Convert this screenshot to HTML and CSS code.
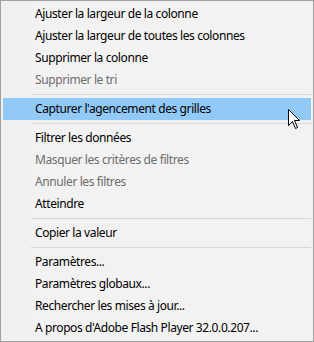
FILE: index.html
```html
<!DOCTYPE html>
<html lang="fr">
<head>
<meta charset="utf-8">
<link rel="stylesheet" href="styles.css">
</head>
<body>
<div class="menu">
  <div class="item">Ajuster la largeur de la colonne</div>
  <div class="item">Ajuster la largeur de toutes les colonnes</div>
  <div class="item">Supprimer la colonne</div>
  <div class="item disabled">Supprimer le tri</div>
  <div class="sep"></div>
  <div class="item active">Capturer l'agencement des grilles</div>
  <div class="sep"></div>
  <div class="item">Filtrer les données</div>
  <div class="item disabled">Masquer les critères de filtres</div>
  <div class="item disabled">Annuler les filtres</div>
  <div class="item">Atteindre</div>
  <div class="sep"></div>
  <div class="item">Copier la valeur</div>
  <div class="sep"></div>
  <div class="item">Paramètres...</div>
  <div class="item">Paramètres globaux...</div>
  <div class="item">Rechercher les mises à jour...</div>
  <div class="item">A propos d'Adobe Flash Player 32.0.0.207...</div>
  <svg class="cursor" width="13" height="21" viewBox="0 0 13 21">
    <path d="M0.5 0.5 L0.5 16.5 L4.5 12.5 L7.5 19.5 L9.5 18.5 L6.5 11.5 L11.5 11.5 Z" fill="#fff" stroke="#000" stroke-width="1" stroke-linejoin="miter"/>
  </svg>
</div>
</body>
</html>
```
FILE: styles.css
```css
html, body {
  margin: 0;
  padding: 0;
  background: #f0f0f0;
}
.menu {
  position: relative;
  box-sizing: border-box;
  width: 314px;
  height: 342px;
  border: 1px solid #a0a0a0;
  padding: 2px;
  background: linear-gradient(to right, #f0f0f0 0, #f0f0f0 30px, #f2f2f2 30px);
  font-family: "Noto Sans", "Open Sans", sans-serif;
  font-size: 12px;
  letter-spacing: -0.4px;
  color: #000;
  display: flex;
  flex-direction: column;
}
.item {
  height: 22px;
  line-height: 22px;
  padding-left: 32px;
  white-space: nowrap;
}
.item.disabled {
  color: #6d6d6d;
}
.item.active {
  background: #91c9f7;
}
.sep {
  height: 1px;
  margin: 3px 0 3px 28px;
  background: #d7d7d7;
}
.cursor {
  position: absolute;
  left: 287px;
  top: 108px;
}
```
